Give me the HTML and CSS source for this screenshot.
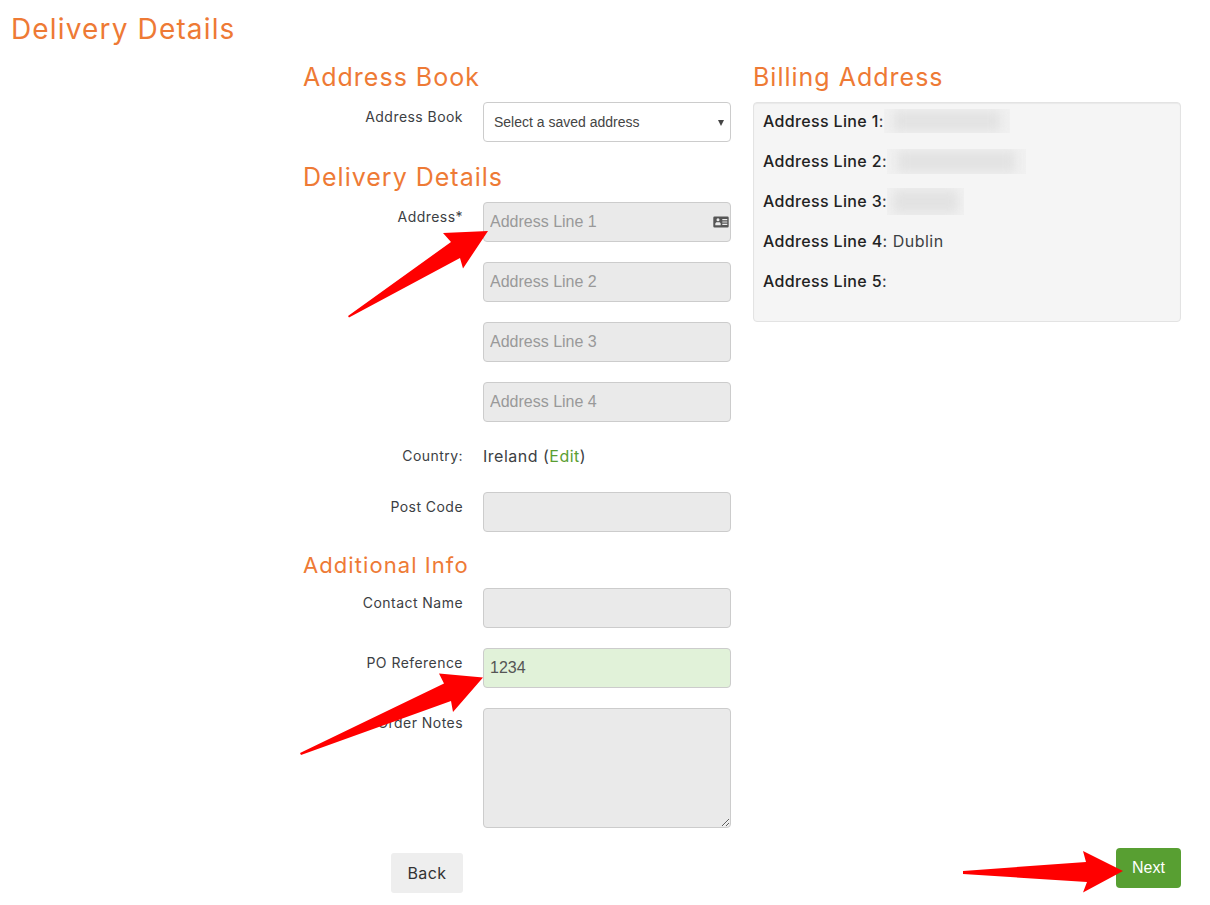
FILE: index.html
```html
<!DOCTYPE html>
<html lang="en">
<head>
<meta charset="utf-8">
<title>Delivery Details</title>
<link rel="stylesheet" href="styles.css">
</head>
<body>
<main class="page">
  <h1 class="page-title">Delivery Details</h1>
  <div class="columns">
    <form class="form-col">
      <h2 class="section-title">Address Book</h2>
      <div class="row row-select">
        <label class="row-label">Address Book</label>
        <div class="control select-wrap">
          <select class="select"><option>Select a saved address</option></select>
        </div>
      </div>
      <h2 class="section-title">Delivery Details</h2>
      <div class="row">
        <label class="row-label">Address*</label>
        <div class="control input-wrap">
          <input class="field" placeholder="Address Line 1">
          <svg class="card-icon" viewBox="0 0 16 12" width="16" height="12" aria-hidden="true">
            <path fill="#555" fill-rule="evenodd" d="M1.5 0.5h13a1.2 1.2 0 0 1 1.2 1.2v8.6a1.2 1.2 0 0 1-1.2 1.2h-13a1.2 1.2 0 0 1-1.2-1.2V1.700a1.200 1.200 0 0 1 1.200-1.200zM5 2.300a1.500 1.500 0 1 0 0 3a1.500 1.500 0 0 0 0-3zM2.300 9.200h5.400V7.800c0-.9-.8-1.500-1.500-1.500H3.800c-.7 0-1.500.6-1.500 1.500zM9.300 3v1.200h5V3zM9.300 5.400v1.200h5V5.400zM9.300 7.800V9h5V7.800z"/>
          </svg>
        </div>
      </div>
      <div class="row">
        <span class="row-label"></span>
        <div class="control"><input class="field" placeholder="Address Line 2"></div>
      </div>
      <div class="row">
        <span class="row-label"></span>
        <div class="control"><input class="field" placeholder="Address Line 3"></div>
      </div>
      <div class="row">
        <span class="row-label"></span>
        <div class="control"><input class="field" placeholder="Address Line 4"></div>
      </div>
      <div class="row row-text">
        <span class="row-label">Country:</span>
        <div class="control country">Ireland (<a class="edit" href="#">Edit</a>)</div>
      </div>
      <div class="row row-last">
        <label class="row-label">Post Code</label>
        <div class="control"><input class="field"></div>
      </div>
      <h3 class="sub-title">Additional Info</h3>
      <div class="row">
        <label class="row-label">Contact Name</label>
        <div class="control"><input class="field"></div>
      </div>
      <div class="row">
        <label class="row-label">PO Reference</label>
        <div class="control"><input class="field field-ok" value="1234"></div>
      </div>
      <div class="row row-last">
        <label class="row-label">Order Notes</label>
        <div class="control"><textarea class="field notes"></textarea></div>
      </div>
      <div class="back-row">
        <button type="button" class="btn-back">Back</button>
      </div>
    </form>
    <aside class="billing-col">
      <h2 class="section-title">Billing Address</h2>
      <div class="well">
        <p class="well-line"><b>Address Line 1</b>:<span class="smudge smudge-1"></span></p>
        <p class="well-line"><b>Address Line 2</b>:<span class="smudge smudge-2"></span></p>
        <p class="well-line"><b>Address Line 3</b>:<span class="smudge smudge-3"></span></p>
        <p class="well-line"><b>Address Line 4</b>: Dublin</p>
        <p class="well-line"><b>Address Line 5</b>:</p>
      </div>
      <div class="next-row">
        <button type="button" class="btn-next">Next</button>
      </div>
    </aside>
  </div>
</main>
<svg class="arrows" viewBox="0 0 1210 905" width="1210" height="905" aria-hidden="true">
  <polygon fill="#ff0000" points="488,231 443,233 451,242 348,316 349,317.500 460,258 463,268.500"/>
  <polygon fill="#ff0000" points="483,677.500 439,673.500 444,683.500 300,753 301,755 451,701 453,712"/>
  <polygon fill="#ff0000" points="1123,871 1083,851 1086,862 963,871 963,874 1087,882 1083,892.500"/>
</svg>
</body>
</html>
```
FILE: styles.css
```css
* {
  box-sizing: border-box;
}

html, body {
  margin: 0;
  padding: 0;
  background: #fff;
}

body {
  font-family: "Inter", "Liberation Sans", sans-serif;
  font-size: 14px;
  color: #3c4043;
  height: 905px;
  overflow: hidden;
}

.page {
  padding: 0 29px 0 11px;
}

.page-title {
  margin: 0;
  height: 58px;
  line-height: 58px;
  font-size: 28px;
  font-weight: 400;
  letter-spacing: 1.15px;
  color: #ee7a35;
}

.columns {
  display: grid;
  grid-template-columns: 428px 428px;
  column-gap: 22px;
  margin-left: 292px;
}

.section-title {
  margin: 0 0 6px;
  height: 38px;
  line-height: 38px;
  font-size: 25px;
  font-weight: 400;
  letter-spacing: 1px;
  color: #ee7a35;
}

.sub-title {
  margin: 14px 0 4px;
  height: 38px;
  line-height: 38px;
  font-size: 22px;
  font-weight: 400;
  letter-spacing: 1.07px;
  color: #ee7a35;
}

.row {
  display: flex;
  column-gap: 20px;
  margin-bottom: 20px;
}

.row-select {
  margin-bottom: 16px;
}

.row-last {
  margin-bottom: 0;
}

.row-label {
  flex: 0 0 160px;
  padding-top: 5px;
  line-height: 20px;
  letter-spacing: 0.45px;
  text-align: right;
}

.control {
  flex: 0 0 248px;
  position: relative;
}

.row-text .row-label {
  padding-top: 4px;
}

.row-text {
  height: 30px;
}

.country {
  padding-top: 4px;
  line-height: 20px;
  font-size: 16px;
  letter-spacing: 0.5px;
}

.edit {
  color: #5a9e32;
  text-decoration: none;
}

.field {
  display: block;
  width: 100%;
  height: 40px;
  padding: 0 6px;
  border: 1px solid #ccc;
  border-radius: 4px;
  background: #eaeaea;
  font-family: "Liberation Sans", Arial, sans-serif;
  font-size: 16px;
  color: #555;
  outline: none;
}

.field::placeholder {
  color: #999;
  opacity: 1;
}

.field-ok {
  background: #e1f2d9;
}

.notes {
  height: 120px;
  padding: 6px;
}

.card-icon {
  position: absolute;
  top: 14px;
  right: 2px;
}

.select {
  display: block;
  width: 100%;
  height: 40px;
  padding: 0 10px;
  appearance: none;
  border: 1px solid #ccc;
  border-radius: 4px;
  background: #fff;
  font-family: "Liberation Sans", Arial, sans-serif;
  font-size: 14px;
  color: #444;
}

.select-wrap::after {
  content: "";
  position: absolute;
  top: 18px;
  right: 7px;
  border-left: 3px solid transparent;
  border-right: 3px solid transparent;
  border-top: 6px solid #444;
}

.back-row {
  display: flex;
  margin-top: 25px;
  padding-left: 88px;
}

.btn-back {
  width: 72px;
  height: 40px;
  padding: 0;
  border: 0;
  border-radius: 3px;
  background: #eee;
  font-family: "Inter", "Liberation Sans", sans-serif;
  font-size: 16px;
  letter-spacing: 0.4px;
  color: #333;
}

.billing-col {
  display: flex;
  flex-direction: column;
}

.well {
  height: 220px;
  padding: 0 9px;
  border: 1px solid #e3e3e3;
  border-radius: 4px;
  background: #f5f5f5;
  box-shadow: inset 0 1px 1px rgba(0, 0, 0, 0.05);
}

.well-line {
  display: flex;
  align-items: center;
  height: 40px;
  margin: -2px 0 2px;
  font-size: 16px;
  letter-spacing: 0.5px;
  white-space: pre;
}

.well-line b {
  font-weight: 500;
  letter-spacing: 0.35px;
  color: #222;
}

.smudge {
  display: block;
  overflow: hidden;
  background: #f1f1f1;
}

.smudge::before {
  content: "";
  display: block;
  height: 100%;
  background: #e2e2e2;
  filter: blur(6px);
  transform: scale(0.85);
}

.smudge-1 {
  width: 126px;
  height: 24px;
}

.smudge-2 {
  width: 139px;
  height: 25px;
}

.smudge-3 {
  width: 77px;
  height: 27px;
}

.next-row {
  display: flex;
  justify-content: flex-end;
  margin-top: auto;
  margin-bottom: 5px;
}

.btn-next {
  width: 65px;
  height: 40px;
  padding: 0;
  border: 0;
  border-radius: 4px;
  background: #589f32;
  font-family: "Liberation Sans", Arial, sans-serif;
  font-size: 16px;
  color: #fff;
}

.arrows {
  position: absolute;
  top: 0;
  left: 0;
  pointer-events: none;
}
```
